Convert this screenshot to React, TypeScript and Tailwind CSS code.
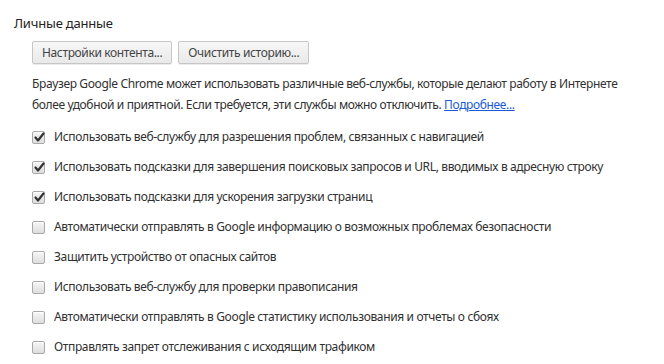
const options = [
  { label: "Использовать веб-службу для разрешения проблем, связанных с навигацией", checked: true },
  { label: "Использовать подсказки для завершения поисковых запросов и URL, вводимых в адресную строку", checked: true },
  { label: "Использовать подсказки для ускорения загрузки страниц", checked: true },
  { label: "Автоматически отправлять в Google информацию о возможных проблемах безопасности", checked: false },
  { label: "Защитить устройство от опасных сайтов", checked: false },
  { label: "Использовать веб-службу для проверки правописания", checked: false },
  { label: "Автоматически отправлять в Google статистику использования и отчеты о сбоях", checked: false },
  { label: "Отправлять запрет отслеживания с исходящим трафиком", checked: false },
];

function Checkbox({ checked }: { checked: boolean }) {
  return (
    <span className="relative w-[13px] h-[13px] shrink-0 rounded-[2px] border border-[#a9a9a9] bg-gradient-to-b from-[#f6f6f6] to-[#dedede] shadow-[inset_0_1px_0_#fff]">
      {checked && (
        <svg className="absolute left-[1px] top-[0px]" width="11" height="11" viewBox="0 0 11 11">
          <path d="M1.5 5.5 L4 8.5 L9.5 1.5" fill="none" stroke="#333" strokeWidth="2.2" strokeLinecap="round" strokeLinejoin="round" />
        </svg>
      )}
    </span>
  );
}

function Button({ children }: { children: React.ReactNode }) {
  return (
    <button className="h-[23px] px-[9px] rounded-[2px] border border-[#c6c6c6] bg-gradient-to-b from-[#f7f7f7] to-[#e9e9e9] text-[#444] shadow-[0_1px_0_rgba(0,0,0,0.08)]">
      {children}
    </button>
  );
}

export default function App() {
  return (
    <div className="w-[664px] h-[364px] bg-white text-[#303030] text-[12px] tracking-[-0.36px] font-['Noto_Sans',sans-serif] overflow-hidden">
      <h3 className="pl-[14px] pt-[13px] text-[13px] text-[#222] font-normal leading-[20px] tracking-[-0.2px]">Личные данные</h3>
      <div className="pl-[32px] pt-[8px]">
        <div className="flex gap-[6px]">
          <Button>Настройки контента...</Button>
          <Button>Очистить историю...</Button>
        </div>
        <p className="mt-[9px] leading-[21px] w-[600px]">
          Браузер Google Chrome может использовать различные веб-службы, которые делают работу в Интернете более удобной и приятной. Если требуется, эти службы можно отключить.{" "}
          <a className="text-[#1a5ad6] underline">Подробнее...</a>
        </p>
        <div className="mt-[7px] flex flex-col">
          {options.map((o) => (
            <label key={o.label} className="flex items-center h-[30px] gap-[9px]">
              <Checkbox checked={o.checked} />
              <span>{o.label}</span>
            </label>
          ))}
        </div>
      </div>
    </div>
  );
}
